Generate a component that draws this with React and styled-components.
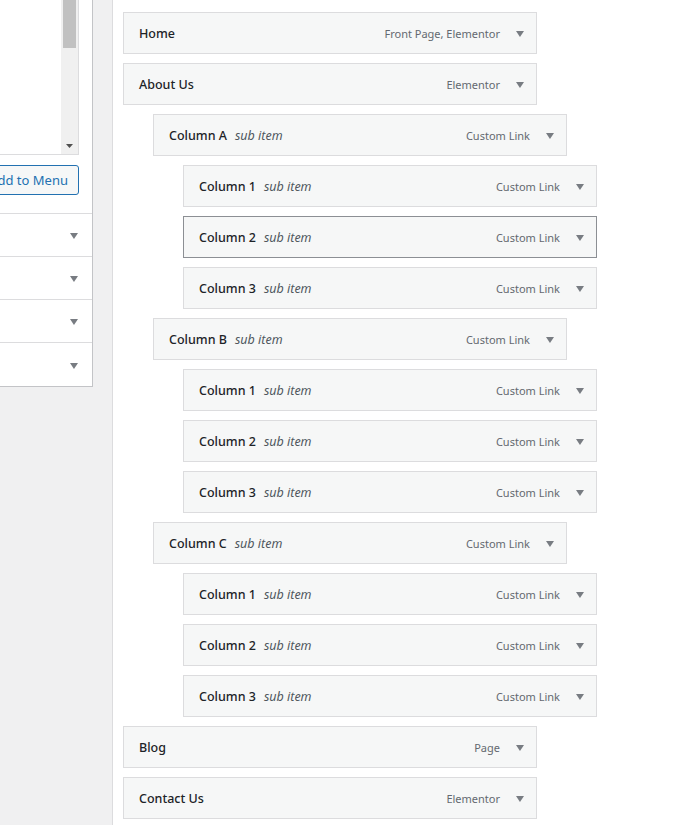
import React from 'react';
import styled, { createGlobalStyle } from 'styled-components';

const GlobalStyle = createGlobalStyle`
	html, body {
		margin: 0;
		padding: 0;
		background: #f0f0f1;
		font-family: "Noto Sans", "Open Sans", sans-serif;
		font-size: 13px;
		color: #1d2327;
	}
	* {
		box-sizing: border-box;
	}
`;

const Page = styled.div`
	display: flex;
	align-items: flex-start;
	gap: 19px;
	min-height: 825px;
	overflow: hidden;
`;

const Sidebar = styled.div`
	width: 93px;
	flex-shrink: 0;
	overflow: hidden;
`;

const SidePanel = styled.div`
	width: 300px;
	margin-left: -207px;
	background: #fff;
	border-right: 1px solid #c3c4c7;
	border-bottom: 1px solid #c3c4c7;
	box-shadow: 0 1px 1px rgba(0, 0, 0, 0.04);
`;

const SectionContent = styled.div`
	padding: 0 13px 18px 14px;
	border-bottom: 1px solid #dcdcde;
`;

const ListBox = styled.div`
	display: flex;
	height: 155px;
	border: 1px solid #dcdcde;
	border-top: none;
`;

const ListArea = styled.div`
	flex: 1;
	background: #fff;
`;

const ScrollTrack = styled.div`
	width: 17px;
	display: flex;
	flex-direction: column;
	justify-content: space-between;
	background: #f0f0f0;
`;

const ScrollThumb = styled.div`
	height: 48px;
	margin: 0 2px;
	background: #c1c1c1;
`;

const ScrollArrow = styled.div`
	height: 17px;
	display: flex;
	align-items: center;
	justify-content: center;
`;

const ButtonRow = styled.div`
	display: flex;
	justify-content: flex-end;
	margin-top: 10px;
`;

const OutlineButton = styled.button`
	height: 30px;
	padding: 0 10px;
	border: 1px solid #2271b1;
	border-radius: 3px;
	background: #f6f7f7;
	color: #2271b1;
	font-family: inherit;
	font-size: 13px;
	line-height: 28px;
	white-space: nowrap;
`;

const SectionRow = styled.div`
	display: flex;
	align-items: center;
	justify-content: flex-end;
	height: 43px;
	padding: 0 9px 0 14px;
	border-bottom: ${({ last }) => (last ? 'none' : '1px solid #dcdcde')};
`;

const MenuArea = styled.div`
	flex: 1;
	min-height: 825px;
	background: #fff;
	border-left: 1px solid #dcdcde;
	padding: 12px 10px 0;
`;

const MenuList = styled.ul`
	display: flex;
	flex-direction: column;
	gap: 9px;
	margin: 0;
	padding: 0;
	list-style: none;
`;

const MenuItem = styled.li`
	display: flex;
	align-items: center;
	width: 414px;
	height: 42px;
	margin-left: ${({ depth }) => depth * 30}px;
	padding: 0 7px 0 15px;
	background: #f6f7f7;
	border: 1px solid ${({ focused }) => (focused ? '#8c8f94' : '#dcdcde')};
`;

const ItemTitle = styled.span`
	font-size: 12.5px;
	font-weight: 500;
	color: #1d2327;
`;

const SubLabel = styled.span`
	margin-left: 8px;
	font-style: italic;
	font-weight: 400;
	color: #50575e;
`;

const ItemType = styled.span`
	margin-left: auto;
	margin-right: 9px;
	font-size: 11px;
	color: #646970;
`;

const ArrowIcon = ({ size = 20 }) => (
	<svg width={size} height={size} viewBox="0 0 20 20" aria-hidden="true">
		<path d="M15 8l-4.03 6L7 8h8z" fill="#787c82" />
	</svg>
);

const SmallArrow = () => (
	<svg width="7" height="4" viewBox="0 0 7 4" aria-hidden="true">
		<path d="M0 0h7L3.5 4z" fill="#505050" />
	</svg>
);

const sections = ['Posts', 'Custom Links', 'Categories', 'Elementor'];

const columns = ['Column A', 'Column B', 'Column C'];

const menuItems = [
	{ title: 'Home', type: 'Front Page, Elementor', depth: 0 },
	{ title: 'About Us', type: 'Elementor', depth: 0 },
	...columns.flatMap((col, ci) => [
		{ title: col, sub: true, type: 'Custom Link', depth: 1 },
		...[1, 2, 3].map((n) => ({
			title: `Column ${n}`,
			sub: true,
			type: 'Custom Link',
			depth: 2,
			focused: ci === 0 && n === 2,
		})),
	]),
	{ title: 'Blog', type: 'Page', depth: 0 },
	{ title: 'Contact Us', type: 'Elementor', depth: 0 },
];

const App = () => {
	return (
		<>
			<GlobalStyle />
			<Page>
				<Sidebar>
					<SidePanel>
						<SectionContent>
							<ListBox>
								<ListArea />
								<ScrollTrack>
									<ScrollThumb />
									<ScrollArrow>
										<SmallArrow />
									</ScrollArrow>
								</ScrollTrack>
							</ListBox>
							<ButtonRow>
								<OutlineButton>Add to Menu</OutlineButton>
							</ButtonRow>
						</SectionContent>
						{sections.map((name, i) => (
							<SectionRow key={name} aria-label={name} last={i === sections.length - 1}>
								<ArrowIcon />
							</SectionRow>
						))}
					</SidePanel>
				</Sidebar>
				<MenuArea>
					<MenuList>
						{menuItems.map((item, key) => (
							<MenuItem key={key} depth={item.depth} focused={item.focused}>
								<ItemTitle>
									{item.title}
									{item.sub && <SubLabel>sub item</SubLabel>}
								</ItemTitle>
								<ItemType>{item.type}</ItemType>
								<ArrowIcon />
							</MenuItem>
						))}
					</MenuList>
				</MenuArea>
			</Page>
		</>
	);
};

export default App;
